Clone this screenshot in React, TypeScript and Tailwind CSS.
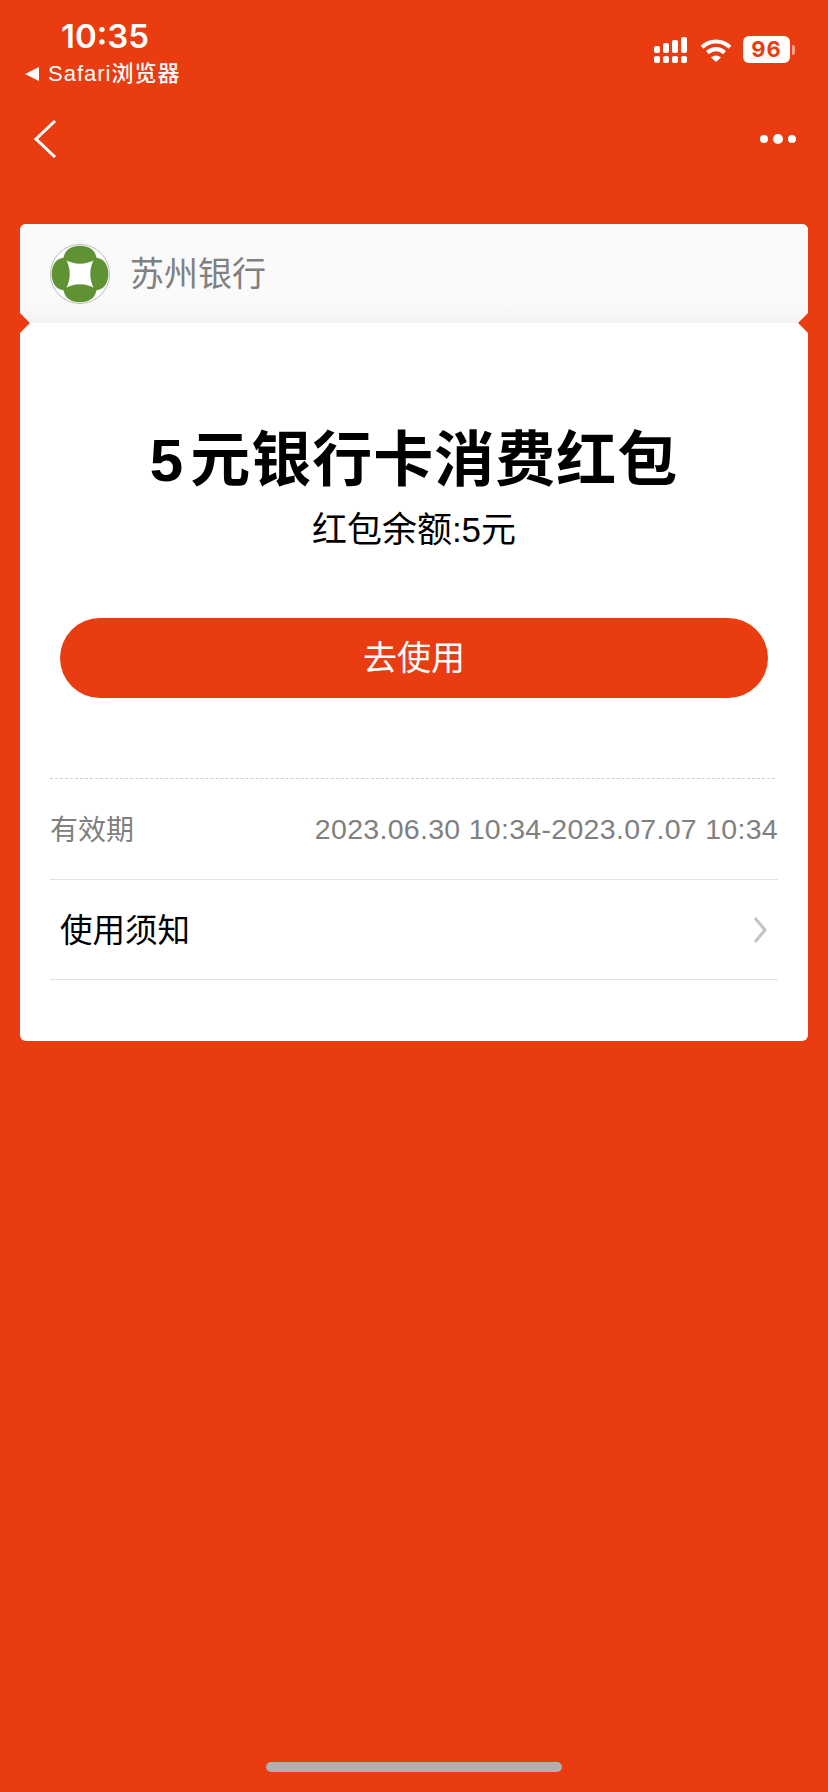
function SignalIcon() {
  return (
    <svg width="34" height="26" viewBox="0 0 34 26" fill="#fff">
      <rect x="0" y="9" width="6" height="7" rx="2" />
      <rect x="9" y="6" width="6" height="10" rx="2" />
      <rect x="18" y="3" width="6" height="13" rx="2" />
      <rect x="27" y="0" width="6" height="16" rx="2" />
      <rect x="0" y="19" width="6" height="7" rx="2" />
      <rect x="9" y="19" width="6" height="7" rx="2" />
      <rect x="18" y="19" width="6" height="7" rx="2" />
      <rect x="27" y="19" width="6" height="7" rx="2" />
    </svg>
  );
}

function WifiIcon() {
  return (
    <svg width="32" height="24" viewBox="0 0 32 24" fill="none" stroke="#fff" strokeWidth="4.2">
      <path d="M2 9.2C10 1.6 22 1.6 30 9.2" />
      <path d="M7.4 14.6C12.4 10 19.6 10 24.6 14.6" />
      <path d="M11 19.5L16 24L21 19.5C18 16.8 14 16.8 11 19.5Z" fill="#fff" stroke="none" />
    </svg>
  );
}

const lobe = 'M13.5 15C14 6 21 1.7 30 1.7C39 1.7 46 6 46.5 15Q30 24.5 13.5 15Z';

function BankLogo() {
  return (
    <svg width="60" height="60" viewBox="0 0 60 60">
      <circle cx="30" cy="30" r="29.5" fill="#fff" stroke="#b9b9b9" strokeWidth="1" />
      <g fill="#5f9233">
        <path d={lobe} />
        <path d={lobe} transform="rotate(90 30 30)" />
        <path d={lobe} transform="rotate(180 30 30)" />
        <path d={lobe} transform="rotate(270 30 30)" />
      </g>
    </svg>
  );
}

export default function App() {
  return (
    <div className="flex h-[1792px] w-[828px] flex-col overflow-hidden bg-[#e93c10] font-['Liberation_Sans','Noto_Sans_CJK_SC',sans-serif]">
      <div className="flex h-[88px] items-start justify-between">
        <div className="pl-[25px] pt-[17px] text-white">
          <div className="pl-[36px] font-['Inter'] text-[33px] font-semibold leading-[38px]">10:35</div>
          <div className="mt-[7px] flex items-center text-[22px] font-medium leading-[24px] tracking-[1px]">
            <svg width="15" height="14" viewBox="0 0 15 14" fill="#fff" className="mr-[8px]">
              <path d="M0 7L14 0V14Z" />
            </svg>
            Safari浏览器
          </div>
        </div>
        <div className="flex items-center pr-[33px] pt-[36px]">
          <SignalIcon />
          <div className="ml-[12px]">
            <WifiIcon />
          </div>
          <div className="ml-[11px] flex h-[27px] w-[47px] items-center justify-center rounded-[6px] bg-white font-['Inter'] text-[22px] font-bold tracking-[1px] text-[#e93c10]">
            96
          </div>
          <div className="ml-[2px] h-[10px] w-[3px] rounded-r-full bg-[#f6a48e]" />
        </div>
      </div>

      <div className="flex h-[136px] items-start justify-between pl-[33px] pr-[32px] pt-[32px]">
        <svg width="24" height="38" viewBox="0 0 24 38" fill="none" stroke="#fff" strokeWidth="3">
          <path d="M22 1L3 19L22 37" />
        </svg>
        <div className="mt-[14px] flex items-center gap-[5px]">
          <div className="size-[8px] rounded-full bg-white" />
          <div className="size-[10px] rounded-full bg-white" />
          <div className="size-[8px] rounded-full bg-white" />
        </div>
      </div>

      <div className="mx-[20px] flex flex-col overflow-hidden rounded-[6px] bg-white">
        <div className="relative flex h-[99px] items-center bg-[linear-gradient(#fafafa_80%,#f3f3f3)] pl-[30px]">
          <BankLogo />
          <span className="ml-[20px] text-[34px] leading-[40px] text-[#808080]">苏州银行</span>
          <div className="absolute -left-[7px] bottom-[-7px] size-[14px] rotate-45 bg-[#e93c10]" />
          <div className="absolute -right-[7px] bottom-[-7px] size-[14px] rotate-45 bg-[#e93c10]" />
        </div>

        <div className="flex flex-col items-center pt-[104px]">
          <div className="text-[60px] font-bold leading-[68px] tracking-[1px] text-black">
            <span className="mr-[6px]">5</span>元银行卡消费红包
          </div>
          <div className="mt-[15px] text-[35px] leading-[40px] text-black">红包余额:5元</div>
        </div>

        <div className="mx-[40px] mt-[68px] flex h-[80px] items-center justify-center rounded-full bg-[#e93c10] text-[34px] text-white">
          去使用
        </div>

        <div className="ml-[30px] mr-[33px] mt-[80px] border-t border-dashed border-[#cfcfcf]" />

        <div className="mx-[30px] flex h-[101px] items-center justify-between border-b border-[#e2e2e2] text-[#808080]">
          <span className="pt-[3px] text-[28px]">有效期</span>
          <span className="text-[28.5px] tracking-[0.3px]">2023.06.30 10:34-2023.07.07 10:34</span>
        </div>

        <div className="mx-[30px] flex h-[100px] items-center justify-between border-b border-[#e2e2e2] pl-[10px] pr-[11px]">
          <span className="pt-[3px] text-[32.5px] text-black">使用须知</span>
          <svg width="14" height="26" viewBox="0 0 14 26" fill="none" stroke="#c4c4c4" strokeWidth="3">
            <path d="M2 1L12 13L2 25" />
          </svg>
        </div>

        <div className="h-[61px]" />
      </div>

      <div className="mx-auto mt-auto mb-[20px] h-[10px] w-[296px] rounded-full bg-[#aeb0b2]" />
    </div>
  );
}
